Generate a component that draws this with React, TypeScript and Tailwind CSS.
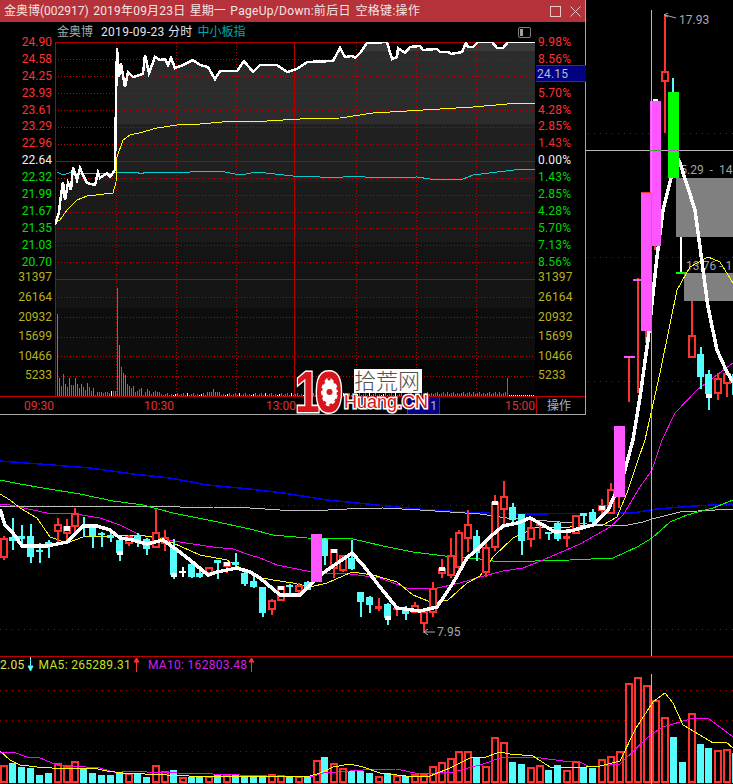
const RED = "#ff3232";
const CY = "#54fcfc";
const PINK = "#ff55ff";
const P = (a: number[]) => {
  const o: string[] = [];
  for (let i = 0; i < a.length; i += 2) o.push(a[i] + "," + a[i + 1]);
  return o.join(" ");
};
const kx = (k: number) => Math.round(4 + 8.93 * k);

// kline: [k, type, high, low, bodyTop, bodyBottom]
const CANDLES: [number, string, number, number, number, number][] = [
  [0,"r",536,560,539,557],[1,"c",518,550,537,541],[2,"c",525,547,536,539],[3,"c",524,563,536,557],[4,"c",543,563,550,552],
  [5,"c",540,558,542,545],[6,"r",518,542,525,531],[7,"r",519,540,527,533],[8,"r",508,532,514,526],[9,"c",517,537,526,528],
  [10,"c",526,548,526,536],[11,"c",532,547,533,535],[12,"c",533,542,535,538],[13,"c",540,561,540,553],[14,"r",535,546,537,543],
  [15,"c",533,547,535,542],[16,"c",538,555,539,549],[17,"r",509,547,533,547],[18,"r",530,551,538,543],[19,"c",539,579,547,575],
  [20,"w",567,577,571,572],[21,"c",562,578,564,577],[22,"c",567,578,573,577],[23,"r",568,577,568,573],[24,"c",560,579,560,563],
  [25,"r",562,573,563,566],[26,"c",553,570,562,565],[27,"c",572,586,573,584],[28,"c",575,588,581,587],[29,"c",587,617,587,613],
  [30,"r",599,615,601,609],[31,"r",586,601,587,600],[32,"c",584,596,585,586],[33,"r",583,593,586,591],[34,"c",581,590,582,590],
  [36,"c",538,565,539,556],[37,"r",549,578,550,568],[38,"r",555,572,556,570],[39,"c",540,570,558,569],[40,"c",592,617,592,602],
  [41,"c",596,613,597,605],[42,"R",598,611,606,609],[43,"c",603,625,604,618],[44,"R",608,616,608,610],[45,"c",606,620,608,614],
  [46,"r",602,613,606,612],[47,"r",612,633,612,623],[48,"r",582,617,589,612],[49,"r",559,578,569,573],[50,"r",538,578,556,575],
  [51,"r",530,570,533,567],[52,"r",510,552,525,538],[53,"c",530,561,536,553],[54,"r",540,577,548,572],[55,"r",495,551,503,547],
  [56,"r",481,528,497,509],[57,"c",503,523,507,520],[58,"c",514,555,514,541],[59,"r",520,547,528,539],[60,"R",523,539,523,526],
  [61,"c",532,540,532,533],[62,"c",522,541,523,539],[63,"R",533,547,536,539],[64,"r",515,534,516,533],[65,"c",513,525,513,516],
  [66,"c",509,523,512,522],[67,"r",499,518,506,510],[68,"r",483,513,490,513],[70,"X",356,402,356,357],[71,"X",278,393,279,280],
  [74,"r",14,133,72,81],[77,"r",301,336,336,357],[78,"c",347,389,354,377],[79,"c",370,410,374,394],[80,"r",373,400,379,393],
  [81,"r",373,397,374,383],[82,"c",372,400,374,395],
];
const CHIPS: [number, number, number][] = [
  [kx(7),526,531],[kx(13),551,555],[kx(19),573,577],[kx(25),562,566],[kx(31),586,590],[kx(37),549,553],[kx(43),616,620],
  [kx(49),567,571],[kx(55),501,505],[kx(67),506,510],[kx(79),394,398],
];

const WHITE = [0,509,5,525,13,533,22,546,47,546,67,542,83,526,97,526,110,530,120,538,133,540,147,544,163,540,177,550,190,560,208,575,217,572,237,568,250,572,260,578,280,595,300,595,310,585,323,573,352,553,363,565,380,587,397,608,420,611,437,607,453,583,467,558,480,547,490,537,503,526,517,523,530,518,543,525,555,532,570,531,593,525,608,510,623,477,633,440,640,397,648,340,657,257,663,210,671,178,676,155,680,163,695,210,708,307,717,350,727,372,733,382];
const YEL = [0,494,10,500,20,508,37,518,50,537,67,543,83,537,113,536,133,535,157,537,173,543,200,555,227,560,240,568,257,577,273,580,293,583,310,587,327,583,352,572,373,575,397,582,413,595,433,603,448,600,467,583,480,576,493,557,513,538,537,527,560,528,580,526,603,525,617,517,627,493,637,463,645,440,660,373,677,290,690,267,708,257,720,262,733,283];
const MAG = [0,504,10,505,33,510,47,513,70,513,100,518,120,525,140,535,173,541,213,547,233,549,250,555,260,558,277,565,297,569,317,573,350,574,380,578,407,588,433,589,460,583,480,577,503,571,523,568,543,560,580,544,610,527,623,515,640,487,652,470,662,440,675,413,697,390,733,363];
const GRN = [0,480,20,484,43,488,80,494,113,501,143,505,173,513,213,521,250,529,273,535,307,538,353,539,383,546,413,552,453,557,480,559,500,562,570,560,613,558,637,547,652,538,670,522,687,515,713,508,733,500];
const BLU = [0,461,27,463,53,465,90,468,133,474,170,478,207,485,250,489,283,493,327,500,367,504,417,509,480,513,520,514,633,513,657,509,693,506,733,504];
const GRY = [0,506,180,507,213,507,250,508,280,510,310,511,347,509,383,508,420,510,480,514,507,518,547,521,587,524,623,526,643,522,652,519,680,512,733,509];

const VOLZ = [347,338,350,353,375,369,341,350,335,353,369,375,375,369,372,372,380,347,365,360,384,381,380,382,375,377,373,378,380,380,374,378,380,382,381,332,321,341,358,362,362,370,380,370,379,377,375,375,350,338,326,305,305,322,350,263,278,336,342,353,347,360,345,362,337,350,354,330,320,305,101,85,107,152,203,261,336,191,282,294,302,299,310];
const VTYPE = "rcccccrrr" + "ccccc" + "r" + "cc" + "rr" + "c" + "r" + "cc" + "r" + "c" + "r" + "cccc" + "rr" + "c" + "r" + "c" + "r" + "c" + "rr" + "ccc" + "r" + "c" + "r" + "c" + "rrrrrrr" + "c" + "rrr" + "cc" + "rr" + "cc" + "rr" + "cc" + "rrrrrrrr" + "cc" + "r" + "cc" + "rr" + "c";
const VYEL = [0,751,10,760,20,765,37,767,67,769,93,768,107,771,123,773,167,775,210,777,233,776,277,776,310,776,320,773,333,767,350,764,363,767,380,773,406,776,430,776,450,768,470,758,486,757,500,752,510,754,533,756,550,767,563,768,586,767,600,766,620,761,636,728,653,702,665,693,673,703,683,725,700,735,713,743,726,742,733,748];
const VMAG = [0,752,13,752,27,757,40,758,57,765,100,768,117,773,127,771,147,772,177,773,213,774,267,776,310,777,323,773,363,770,396,769,420,774,453,772,480,765,503,757,533,757,563,761,580,762,590,767,620,764,650,735,663,727,690,719,708,718,733,737];

const TW = [55,225,59,212,60,203,63,182,65,200,68,183,71,190,73,167,77,180,80,168,83,175,87,183,95,185,98,172,100,178,107,173,110,177,115,170,116,100,117,48,119,77,121,63,125,87,128,72,133,77,143,74,145,55,149,73,155,57,160,60,165,59,168,65,171,58,175,68,183,65,193,60,200,65,208,67,215,79,220,71,237,71,244,61,253,72,260,65,277,65,287,72,297,69,307,62,333,61,340,48,345,57,352,56,355,58,360,53,367,43,387,42,392,59,397,57,398,48,405,53,410,47,420,46,423,50,437,49,440,52,448,52,451,54,462,52,466,43,468,47,473,47,478,42,492,42,497,48,503,48,508,42,535,42];
const TY = [55,223,60,220,67,210,77,200,87,196,113,193,116,182,117,157,123,140,130,135,143,132,157,128,177,125,200,124,233,121,267,121,300,119,340,118,373,113,407,111,440,109,473,107,507,104,535,103];
const TT = [57,172,63,175,72,172,78,174,100,173,113,173,120,172,137,172,140,174,147,172,177,173,203,171,220,171,240,175,257,172,293,176,310,176,330,178,357,176,373,178,417,177,430,179,463,179,473,175,497,172,523,169,535,169];

const IVH: [string, number][] = [["g",312],["g",505],["r",528],["r",492],["g",522],["r",530],["g",505],["r",525],["r",525],["g",505],["g",522],["g",533],["g",522],["g",530],["r",540],["g",518],["r",530],["r",543],["g",535],["r",555],["g",547],["r",547],["g",547],["r",548],["r",546],["r",547],["r",550],["w",544],["r",544],["r",544],["r",235],["g",405],["r",470],["g",490],["g",495],["r",522],["g",527],["r",533],["g",528],["r",545],["r",542],["r",538],["g",533],["r",555],["r",547],["g",537],["g",543],["r",553],["g",546],["r",544],["g",545],["r",546],["r",552]];
const IV_COL: Record<string, string> = { r: RED, g: "#00d000", w: "#ffffff" };
const ivBars = (() => {
  const out: { x: number; y: number; c: string }[] = [];
  for (let i = 0; i < 239; i++) {
    const x = 57 + 2 * i;
    if (i < IVH.length) {
      out.push({ x, y: Math.round(210 + IVH[i][1] / 3), c: IV_COL[IVH[i][0]] });
      continue;
    }
    const s = (i * 37 + 11) % 13;
    let h = 1 + (s % 3);
    let c = s < 5 ? "r" : s < 10 ? "g" : "w";
    if (i > 74 && i < 82) { c = "g"; h = i === 78 ? 7 : 4; }
    if (i > 180 && i < 225) { h = 2 + (s % 3); c = s < 6 ? "r" : "g"; }
    if (i === 225) { c = "r"; h = 18; }
    if (i > 225) { c = "w"; h = 1; }
    out.push({ x, y: 396 - h, c: IV_COL[c] });
  }
  return out;
})();

function Grid() {
  const hs = [59.5,76.5,93.5,110.5,127.5,144.5,178.5,195.5,212.5,228.5,245.5,262.5,297.5,317.5,337.5,356.5,376.5];
  const vs = [116.5,176.5,236.5,356.5,416.5,476.5];
  return (
    <g shapeRendering="crispEdges">
      {hs.map((y) => (
        <line key={y} x1={55} x2={534} y1={y} y2={y} stroke="#c00000" strokeDasharray="1 2" />
      ))}
      {vs.map((x) => (
        <line key={x} x1={x} x2={x} y1={43} y2={396} stroke="#c00000" strokeDasharray="1 2" />
      ))}
      {[42.5,161.5,279.5].map((y) => (
        <line key={y} x1={55} x2={535} y1={y} y2={y} stroke="#b00000" />
      ))}
      {[55.5,294.5].map((x) => (
        <line key={x} x1={x} x2={x} y1={43} y2={396} stroke="#b00000" />
      ))}
    </g>
  );
}

function IntradayChart() {
  const area = P([...TW, 535, 396, 55, 396]);
  const bands: [number, number, string][] = [
    [42,51,"#3a3a3a"],[51,124,"#2c2c2c"],[124,182,"#202020"],[182,242,"#1b1b1b"],[242,308,"#141414"],[308,360,"#0d0d0d"],[360,396,"#050505"],
  ];
  return (
    <svg viewBox="55 42 480 354" className="block h-[354px] w-[480px] shrink-0 bg-black">
      <defs>
        <clipPath id="areaClip"><polygon points={area} /></clipPath>
      </defs>
      <g clipPath="url(#areaClip)" shapeRendering="crispEdges">
        {bands.map(([a, b, c]) => (
          <rect key={a} x={55} y={a} width={480} height={b - a} fill={c} />
        ))}
      </g>
      <Grid />
      <g shapeRendering="crispEdges">
        {ivBars.map((b) => (
          <rect key={b.x} x={b.x} y={b.y} width={1} height={396 - b.y} fill={b.c} />
        ))}
        <polyline points={P(TT)} fill="none" stroke="#00d0d0" strokeWidth={1} />
        <polyline points={P(TY)} fill="none" stroke="#ffff00" strokeWidth={1} />
        <polyline points={P(TW)} fill="none" stroke="#ffffff" strokeWidth={2.5} />
      </g>
    </svg>
  );
}

function Candle({ c }: { c: (typeof CANDLES)[number] }) {
  const [k, t, hi, lo, top, bot] = c;
  const x = kx(k);
  if (t === "r") {
    return (
      <g>
        <rect x={x - 1} y={hi} width={2} height={top - hi} fill={RED} />
        <rect x={x - 1} y={bot} width={2} height={lo - bot} fill={RED} />
        <rect x={x - 3} y={top} width={6} height={bot - top} fill="#000" stroke={RED} strokeWidth={2} />
      </g>
    );
  }
  if (t === "X") {
    return (
      <g>
        <rect x={x - 1} y={hi} width={2} height={lo - hi} fill={RED} />
        <rect x={x - 5} y={top} width={11} height={2} fill={PINK} />
      </g>
    );
  }
  const col = t === "c" ? CY : t === "w" ? "#ffffff" : RED;
  return (
    <g>
      <rect x={x - 1} y={hi} width={2} height={lo - hi} fill={col} />
      <rect x={x - 4} y={top} width={7} height={Math.max(1.5, bot - top)} fill={col} />
    </g>
  );
}

function KlineChart() {
  const dots = [133.5, 257.5, 381.5, 505.5, 629.5];
  return (
    <svg viewBox="0 0 733 656" className="block h-[656px] w-[733px] shrink-0 text-[12px]">
      <g shapeRendering="crispEdges">
        {dots.map((y) => (
          <line key={y} x1={0} x2={733} y1={y} y2={y} stroke="#801010" strokeDasharray="1 5" />
        ))}
        <rect x={676} y={178} width={57} height={59} fill="#808080" />
        <rect x={684} y={273} width={49} height={28} fill="#808080" />
      </g>
      <text x={673.5} y={174} fill="#a0a0a8" wordSpacing={3}>15.29 - 14</text>
      <text x={686} y={270} fill="#a0a0a8">13.76 - 1</text>
      <text x={679} y={24} fill="#a8a8b0">17.93</text>
      <text x={437} y={636} fill="#a8a8b0">7.95</text>
      <g shapeRendering="crispEdges">
        <rect x={680} y={237} width={2} height={35} fill="#ffffff" />
        <rect x={676} y={272} width={11} height={1.5} fill="#00ff00" />
        <polyline points={P(BLU)} fill="none" stroke="#0000ff" strokeWidth={1.5} />
        <polyline points={P(GRY)} fill="none" stroke="#c0c0c0" strokeWidth={1} />
        <polyline points={P(GRN)} fill="none" stroke="#00ff00" strokeWidth={1} />
        <polyline points={P(MAG)} fill="none" stroke="#ff00ff" strokeWidth={1} />
        <polyline points={P(YEL)} fill="none" stroke="#ffff00" strokeWidth={1} />
        {CANDLES.map((c) => (
          <Candle key={c[0]} c={c} />
        ))}
        {CHIPS.map(([x, a, b]) => (
          <rect key={x} x={x - 3} y={a} width={6} height={b - a} fill="#ffffff" />
        ))}
        <rect x={645} y={331} width={2} height={12} fill={RED} />
        <rect x={654} y={246} width={2} height={4} fill={RED} />
        <rect x={618} y={497} width={2} height={11} fill={RED} />
        <polyline points={P(WHITE)} fill="none" stroke="#ffffff" strokeWidth={3.5} />
        <rect x={311} y={534} width={11} height={48} fill={PINK} />
        <rect x={614} y={426} width={11} height={71} fill={PINK} />
        <rect x={641} y={193} width={10} height={138} fill={PINK} />
        <rect x={650} y={101} width={11} height={145} fill={PINK} />
        <rect x={653} y={99} width={5} height={2} fill="#ffffff" />
        <rect x={668} y={92} width={11} height={86} fill="#00ff00" />
        <rect x={672} y={78} width={2} height={14} fill={CY} />
        <rect x={641} y={192} width={10} height={1} fill={RED} />
        <line x1={586} x2={733} y1={150.5} y2={150.5} stroke="#b8b8b8" />
        <line x1={651.5} x2={651.5} y1={10} y2={656} stroke="#b8b8b8" />
        <rect x={650} y={150} width={11} height={1} fill="#40a040" />
        <rect x={668} y={150} width={11} height={1} fill="#e040e0" />
        <rect x={651} y={193} width={1} height={138} fill="#70a070" />
      </g>
      <g stroke="#a8a8b0" fill="none">
        <path d="M676 18 L665 15 M668 13 L664 15 L668 17" />
        <path d="M435 632 L424 632 M428 629 L424 632 L428 635" />
      </g>
    </svg>
  );
}

function VolChart() {
  return (
    <svg viewBox="0 672 733 112" className="block h-[112px] w-[733px] shrink-0">
      <g shapeRendering="crispEdges">
        {[690.5, 720.5, 751.5].map((y) => (
          <line key={y} x1={0} x2={733} y1={y} y2={y} stroke="#a00000" strokeDasharray="1 5" />
        ))}
        {VOLZ.map((z, k) => {
          const x = kx(k);
          const y = Math.round(650 + z / 3);
          const t = VTYPE[k] ?? "c";
          return t === "r" ? (
            <rect key={k} x={x - 3} y={y} width={6} height={782 - y} fill="#000" stroke={RED} strokeWidth={2} />
          ) : (
            <rect key={k} x={x - 4} y={y} width={7} height={783 - y} fill={CY} />
          );
        })}
        <polyline points={P(VMAG)} fill="none" stroke="#ff00ff" strokeWidth={1} />
        <polyline points={P(VYEL)} fill="none" stroke="#ffff00" strokeWidth={1} />
        <line x1={651.5} x2={651.5} y1={674} y2={784} stroke="#b8b8b8" />
      </g>
    </svg>
  );
}

function ArrowMark({ up, color }: { up: boolean; color: string }) {
  return (
    <svg width="7" height="15" viewBox="0 0 7 15" className="block shrink-0">
      {up ? (
        <path d="M3.5 1 V15 M1 5 L3.5 1 L6 5 Z" stroke={color} fill={color} />
      ) : (
        <path d="M3.5 0 V13 M1 9 L3.5 14 L6 9 Z" stroke={color} fill={color} />
      )}
    </svg>
  );
}

const LEFT: [string, string][] = [
  ["24.90","#ff3232"],["24.58","#ff3232"],["24.25","#ff3232"],["23.93","#ff3232"],["23.61","#ff3232"],["23.29","#ff3232"],["22.96","#ff3232"],
  ["22.64","#f0f0f0"],["22.32","#00e000"],["21.99","#00e000"],["21.67","#00e000"],["21.35","#00e000"],["21.03","#00e000"],["20.70","#00e000"],
];
const RIGHT: [string, string][] = [
  ["9.98%","#ff3232"],["8.56%","#ff3232"],["","#ff3232"],["5.70%","#ff3232"],["4.28%","#ff3232"],["2.85%","#ff3232"],["1.43%","#e03030"],
  ["0.00%","#f0f0f0"],["1.43%","#00d800"],["2.85%","#00d800"],["4.28%","#00d800"],["5.70%","#00d800"],["7.13%","#00d800"],["8.56%","#00d800"],
];
const VOLL = ["31397","26164","20932","15699","10466","5233"];

function Logo() {
  return (
    <svg viewBox="295 365 145 52" className="absolute left-[295px] top-[365px] h-[52px] w-[145px] overflow-visible">
      <rect x={354} y={369} width={68} height={24} fill="#ffffff" />
      <text x={354} y={389} fontSize={22} fontWeight={300} fill="#505050" fontFamily="'Noto Sans CJK SC',sans-serif">拾荒网</text>
      <text transform="translate(295,412) scale(0.78,1)" fontSize={57} fontWeight={700} fill="#d8141c" stroke="#ffffff" strokeWidth={3} paintOrder="stroke" fontFamily="'Liberation Sans',sans-serif">1</text>
      <text transform="translate(315,412) scale(0.88,1)" fontSize={57} fontWeight={700} fill="#d8141c" stroke="#ffffff" strokeWidth={3} paintOrder="stroke" fontFamily="'Liberation Sans',sans-serif">0</text>
      <ellipse cx={329.5} cy={392} rx={8.5} ry={13} fill="#ffffff" />
      <ellipse cx={329.5} cy={392} rx={8.5} ry={13} fill="none" stroke="#d8141c" strokeWidth={2.5} strokeDasharray="3 4" />
      <circle cx={329.5} cy={392} r={3} fill="#d8141c" />
      <text x={344} y={408} fontSize={18} fill="#d8141c" stroke="#ffffff" strokeWidth={3} paintOrder="stroke" fontFamily="'Liberation Sans',sans-serif">Huang.CN</text>
    </svg>
  );
}

function InfoWindow() {
  return (
    <div className="absolute left-0 top-0 flex h-[415px] w-[586px] flex-col border-b border-r border-[#a8a8a8] bg-black">
      <div className="flex h-[22px] shrink-0 items-center bg-[#b5323a] pl-[4px] text-[#f4e4e4]">
        <span className="whitespace-nowrap [word-spacing:1.5px]">
          金奥博(002917) <span className="tracking-[0.2px]">2019年09月23日</span> 星期一 <span className="tracking-[0.3px]">PageUp/Down:前后日 空格键:操作</span>
        </span>
        <div className="ml-auto flex items-center gap-[9px] pr-[4px]">
          <svg width="11" height="11" viewBox="0 0 11 11"><rect x="0.5" y="0.5" width="10" height="10" fill="none" stroke="#e8c8c8" /></svg>
          <svg width="11" height="11" viewBox="0 0 11 11"><path d="M0.5 0.5 L10.5 10.5 M10.5 0.5 L0.5 10.5" stroke="#e8c8c8" fill="none" /></svg>
        </div>
      </div>
      <div className="flex h-[20px] shrink-0 items-center pl-[57px]">
        <span className="text-[#a0b0b0]">金奥博</span>
        <span className="ml-[8px] tracking-[0.3px] text-[#e0e4f0]">2019-09-23 分时</span>
        <span className="ml-[5px] text-[#00a8a8]">中小板指</span>
        <div className="ml-auto mr-[54px] flex h-[11px] w-[13px] shrink-0 items-center rounded-[2px] border border-[#808080] px-[1px]">
          <div className="h-[7px] w-[3px] bg-[#a0a0a0]" />
        </div>
      </div>
      <div className="flex h-[354px] shrink-0">
        <div className="-mt-[8px] flex w-[55px] shrink-0 flex-col items-end pr-[3px]">
          {LEFT.map(([t, c]) => (
            <div key={t} className="h-[16.9px] leading-[16.9px]" style={{ color: c }}>{t}</div>
          ))}
          <div className="-mt-[2px] flex flex-col items-end">
            {VOLL.map((t) => (
              <div key={t} className="h-[19.6px] leading-[19.6px] text-[#b8b020]">{t}</div>
            ))}
          </div>
        </div>
        <IntradayChart />
        <div className="relative -mt-[8px] flex w-[50px] shrink-0 flex-col border-l border-transparent pl-[2px] tracking-[0.2px]">
          {RIGHT.map(([t, c], i) => (
            <div key={i} className="h-[16.9px] leading-[16.9px]" style={{ color: c }}>{t}</div>
          ))}
          <div className="-mt-[2px] flex flex-col">
            {VOLL.map((t) => (
              <div key={t} className="h-[19.6px] leading-[19.6px] text-[#b8b020]">{t}</div>
            ))}
          </div>
          <div className="absolute left-0 top-[31px] flex h-[17px] w-[50px] items-center border-y border-[#c00000] bg-[#000080] pl-[1px] text-[#b8b8d8]">24.15</div>
        </div>
      </div>
      <div className="flex h-[18px] shrink-0 items-center border-t border-[#c00000] text-[#e03030]">
        <span className="ml-[24px] w-[31px]">09:30</span>
        <span className="ml-[89px] w-[31px]">10:30</span>
        <span className="ml-[91px] w-[31px]">13:00</span>
        <div className="ml-[110px] flex h-full w-[33px] items-center justify-end border-x border-[#c00000] bg-[#000080] pr-[2px] text-[#b8b8d8]">1</div>
        <span className="ml-[65px] w-[31px]">15:00</span>
        <div className="h-full w-px bg-[#c00000]" />
        <span className="ml-[10px] text-[#a0b4c8]">操作</span>
      </div>
    </div>
  );
}

export default function App() {
  return (
    <div className="relative flex h-[784px] w-[733px] flex-col overflow-hidden bg-black font-[Roboto,'Noto_Sans_CJK_SC',sans-serif] text-[12px]">
      <KlineChart />
      <div className="h-px shrink-0 bg-[#c00000]" />
      <div className="flex h-[15px] shrink-0 items-center whitespace-nowrap tracking-[0.3px]">
        <span className="text-[#e4e060]">2.05</span>
        <span className="ml-[2px]"><ArrowMark up={false} color={CY} /></span>
        <span className="ml-[5px] text-[#c8e020]">MA5: 265289.31</span>
        <span className="ml-[2px]"><ArrowMark up color={RED} /></span>
        <span className="ml-[8px] text-[#d020e8]">MA10: 162803.48</span>
        <span className="ml-[1px]"><ArrowMark up color={RED} /></span>
      </div>
      <VolChart />
      <InfoWindow />
      <Logo />
    </div>
  );
}
